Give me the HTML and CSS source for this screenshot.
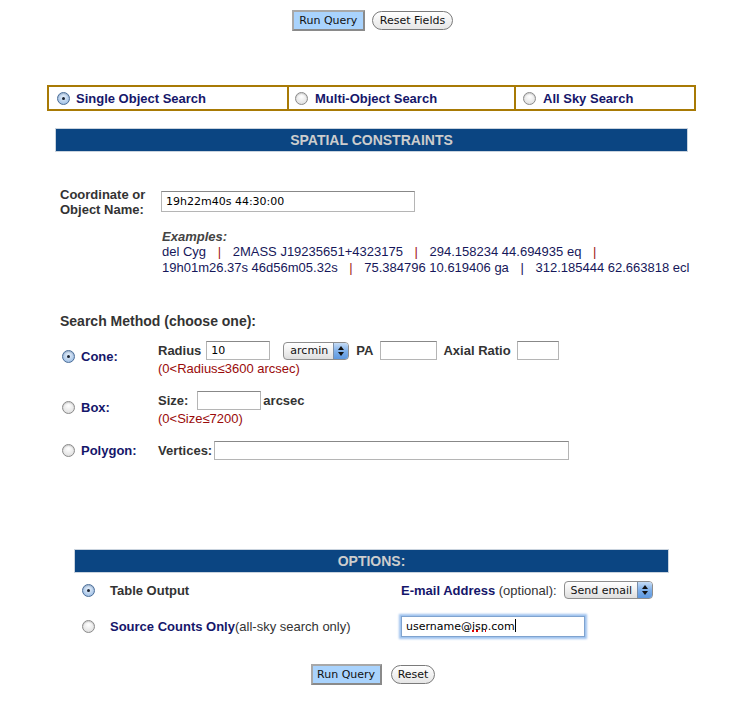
FILE: index.html
```html
<!DOCTYPE html>
<html>
<head>
<meta charset="utf-8">
<link rel="stylesheet" href="styles.css">
</head>
<body>
<div class="page">
  <div class="btn-row top">
    <button class="btn-run">Run Query</button>
    <button class="btn-pill">Reset Fields</button>
  </div>

  <div class="search-type">
    <div class="st-cell st-1"><span class="radio on"></span>Single Object Search</div>
    <div class="st-cell st-2"><span class="radio"></span>Multi-Object Search</div>
    <div class="st-cell st-3"><span class="radio"></span>All Sky Search</div>
  </div>

  <div class="bar spatial">SPATIAL CONSTRAINTS</div>

  <div class="spatial-body">
    <div class="coord-row">
      <div class="lbl coord-lbl">Coordinate or<br>Object Name:</div>
      <div class="input coord-input">19h22m40s 44:30:00</div>
    </div>
    <div class="examples">
      <div class="ex-title">Examples:</div>
      <div>del Cyg <span class="sep">|</span> 2MASS J19235651+4323175 <span class="sep">|</span> 294.158234 44.694935 eq <span class="sep">|</span></div>
      <div>19h01m26.37s 46d56m05.32s <span class="sep">|</span> 75.384796 10.619406 ga <span class="sep blue">|</span> 312.185444 62.663818 ecl</div>
    </div>

    <div class="lbl method-lbl">Search Method (choose one):</div>

    <div class="method cone">
      <div class="m-name"><span class="radio on"></span>Cone:</div>
      <div class="m-fields">
        <div class="m-line">
          <span class="lbl">Radius</span>
          <span class="input w-radius">10</span>
          <span class="select sel-unit">arcmin<span class="arrows"></span></span>
          <span class="lbl l-pa">PA</span>
          <span class="input w-pa"></span>
          <span class="lbl l-ar">Axial Ratio</span>
          <span class="input w-ar"></span>
        </div>
        <div class="hint">(0&lt;Radius≤3600 arcsec)</div>
      </div>
    </div>

    <div class="method box">
      <div class="m-name"><span class="radio"></span>Box:</div>
      <div class="m-fields">
        <div class="m-line">
          <span class="lbl">Size:</span>
          <span class="input w-size"></span>
          <span class="lbl l-arcsec">arcsec</span>
        </div>
        <div class="hint">(0&lt;Size≤7200)</div>
      </div>
    </div>

    <div class="method poly">
      <div class="m-name"><span class="radio"></span>Polygon:</div>
      <div class="m-fields">
        <div class="m-line">
          <span class="lbl">Vertices:</span>
          <span class="input w-vert"></span>
        </div>
      </div>
    </div>
  </div>

  <div class="bar options">OPTIONS:</div>

  <div class="opt-grid">
    <div class="opt-left"><span class="radio on"></span><b class="gray">Table Output</b></div>
    <div class="opt-right"><b class="navy">E-mail Address</b>&nbsp;(optional):<span class="select sel-email">Send email<span class="arrows"></span></span></div>
    <div class="opt-left"><span class="radio"></span><b class="navy">Source Counts Only</b>(all-sky search only)</div>
    <div class="opt-right"><span class="input focus w-email">username@<span class="spell">isp</span>.com<span class="caret"></span></span></div>
  </div>

  <div class="btn-row bottom">
    <button class="btn-run small">Run Query</button>
    <button class="btn-pill">Reset</button>
  </div>
</div>
</body>
</html>
```
FILE: styles.css
```css
html, body { margin: 0; padding: 0; background: #fff; }
body { font-family: "Liberation Sans", Arial, sans-serif; font-size: 13px; color: #333; }
.page { width: 737px; }

.btn-row { display: flex; justify-content: center; align-items: center; }
.btn-row.top { padding-top: 10px; gap: 7px; padding-left: 8px; }
.btn-row.bottom { margin-top: 28px; gap: 9px; padding-left: 9px; }

button { font-family: "DejaVu Sans", sans-serif; font-size: 11px; color: #111; margin: 0; cursor: default; }
.btn-run {
  height: 21px; width: 73px; padding: 0;
  background: #a9d3fd; border: 2px solid #999;
  border-top-color: #a8a8a8; border-left-color: #a8a8a8;
  border-right-color: #8a8a8a; border-bottom-color: #8a8a8a;
}
.btn-run.small { width: 71px; }
.btn-pill {
  height: 19px; padding: 0 7px;
  background: linear-gradient(#ffffff, #f2f2f2 50%, #e6e6e6);
  border: 1px solid #7a7a7a; border-radius: 10px;
}
.bottom .btn-pill { padding: 0 6px; }

.radio {
  display: inline-block; width: 11px; height: 11px; border-radius: 50%;
  border: 1px solid #8a8a8a; box-sizing: content-box;
  background: radial-gradient(circle at 50% 35%, #ffffff, #e4e4e4 70%, #cfcfcf);
  vertical-align: middle; position: relative; flex: none;
  box-shadow: inset 0 1px 1px rgba(0,0,0,0.15);
}
.radio.on {
  border-color: #4a6d98;
  background: radial-gradient(circle at 50% 40%, #e8f1fb, #a9c6e8 70%, #7fa5d4);
}
.radio.on::after {
  content: ""; position: absolute; left: 4px; top: 4px; width: 3px; height: 3px;
  border-radius: 50%; background: #1b2433;
}

.search-type {
  margin: 54px 0 0 47px; width: 649px; height: 26px; box-sizing: border-box;
  border: 2px solid #a87a05; display: flex;
  font-size: 13px; font-weight: bold; color: #15166a;
}
.st-cell { display: flex; align-items: center; height: 100%; box-sizing: border-box; }
.st-1 { width: 238px; padding-left: 8px; }
.st-2 { width: 227px; padding-left: 6px; border-left: 2px solid #a87a05; }
.st-3 { flex: 1; padding-left: 7px; border-left: 2px solid #a87a05; }
.st-cell .radio { margin-right: 6px; }
.st-2 .radio, .st-3 .radio { margin-right: 7px; }

.bar {
  background: #0b4582; color: #cdcdcd; font-weight: bold; font-size: 14px;
  text-align: center; box-sizing: border-box; border: 1px solid #c9d3de;
  height: 24px; line-height: 22px;
}
.spatial { margin: 17px 0 0 55px; width: 633px; }
.options { margin: 0 0 0 74px; width: 595px; }

.spatial-body { padding-left: 60px; padding-bottom: 89px; }

.lbl { font-weight: bold; color: #333; }
.coord-row { display: flex; align-items: flex-start; margin-top: 35px; }
.coord-lbl { width: 101px; line-height: 15px; }
.input {
  display: inline-block; box-sizing: border-box; background: #fff;
  border: 1px solid #b5b5b5; border-top-color: #888;
  font-family: "DejaVu Sans", sans-serif; font-size: 11px; color: #000;
  height: 19px; line-height: 17px; padding: 0 4px; vertical-align: middle; flex: none;
}
.coord-input { width: 254px; height: 21px; line-height: 19px; margin-top: 4px; }

.examples { margin: 13px 0 0 102px; color: #16175a; line-height: 16px; }
.ex-title { font-weight: bold; font-style: italic; color: #444; line-height: 14px; }
.sep { color: #a01818; margin: 0 8px; }
.sep.blue { color: #16175a; }

.method-lbl { margin-top: 37px; line-height: 16px; font-size: 14px; }

.method { display: flex; align-items: flex-start; }
.m-name { width: 98px; display: flex; align-items: center; font-weight: bold; color: #15166a; height: 19px; }
.m-name .radio { margin: 0 6px 0 2px; }
.m-line { display: flex; align-items: center; height: 19px; }
.hint { color: #9a0a0a; line-height: 16px; margin-top: 1px; }

.cone { margin-top: 12px; }
.cone .m-name { margin-top: 6px; }
.w-radius { width: 64px; margin-left: 5px; }
.sel-unit { margin-left: 13px; width: 66px; }
.l-pa { margin-left: 7px; }
.w-pa { width: 57px; margin-left: 7px; }
.l-ar { margin-left: 6px; }
.w-ar { width: 42px; margin-left: 6px; }

.box { margin-top: 14px; }
.box .m-name { margin-top: 7px; }
.w-size { width: 64px; margin-left: 9px; }
.l-arcsec { margin-left: 2px; }

.poly { margin-top: 14px; }
.w-vert { width: 355px; margin-left: 2px; }

.select {
  display: inline-flex; align-items: center; box-sizing: border-box; position: relative;
  height: 18px; border: 1px solid #8e8e8e; border-radius: 4px;
  background: linear-gradient(#ffffff, #f0f0f0 50%, #dedede);
  font-family: "DejaVu Sans", sans-serif; font-size: 11px; color: #111;
  padding-left: 6px; overflow: hidden; flex: none;
}
.select .arrows {
  position: absolute; right: 0; top: 0; bottom: 0; width: 14px;
  background: linear-gradient(#c6dcf5, #7fb0ea 50%, #5d98e0);
  border-left: 1px solid #7a8ea8;
}
.select .arrows::before, .select .arrows::after {
  content: ""; position: absolute; left: 4px; width: 0; height: 0;
  border-left: 3px solid transparent; border-right: 3px solid transparent;
}
.select .arrows::before { top: 3px; border-bottom: 4px solid #111; }
.select .arrows::after { bottom: 3px; border-top: 4px solid #111; }

.opt-grid {
  display: grid; grid-template-columns: 319px auto; margin-left: 82px;
  padding-top: 8px;
}
.opt-left { display: flex; align-items: center; height: 18px; }
.opt-left .radio { margin-right: 15px; }
.opt-right { display: flex; align-items: center; height: 18px; }
.opt-grid > :nth-child(3), .opt-grid > :nth-child(4) { margin-top: 17px; height: 20px; }
.gray { color: #333; }
.navy { color: #15166a; }
.sel-email { width: 89px; margin-left: 7px; height: 18px; }
.w-email {
  width: 184px; height: 21px; line-height: 19px;
  border: 1px solid #7fa3cf; box-shadow: 0 0 2px 2px #9ec2ee;
}
.spell { text-decoration: underline dotted #d00; text-decoration-thickness: 2px; }
.caret { display: inline-block; width: 1px; height: 13px; background: #000; vertical-align: -2px; }
```
